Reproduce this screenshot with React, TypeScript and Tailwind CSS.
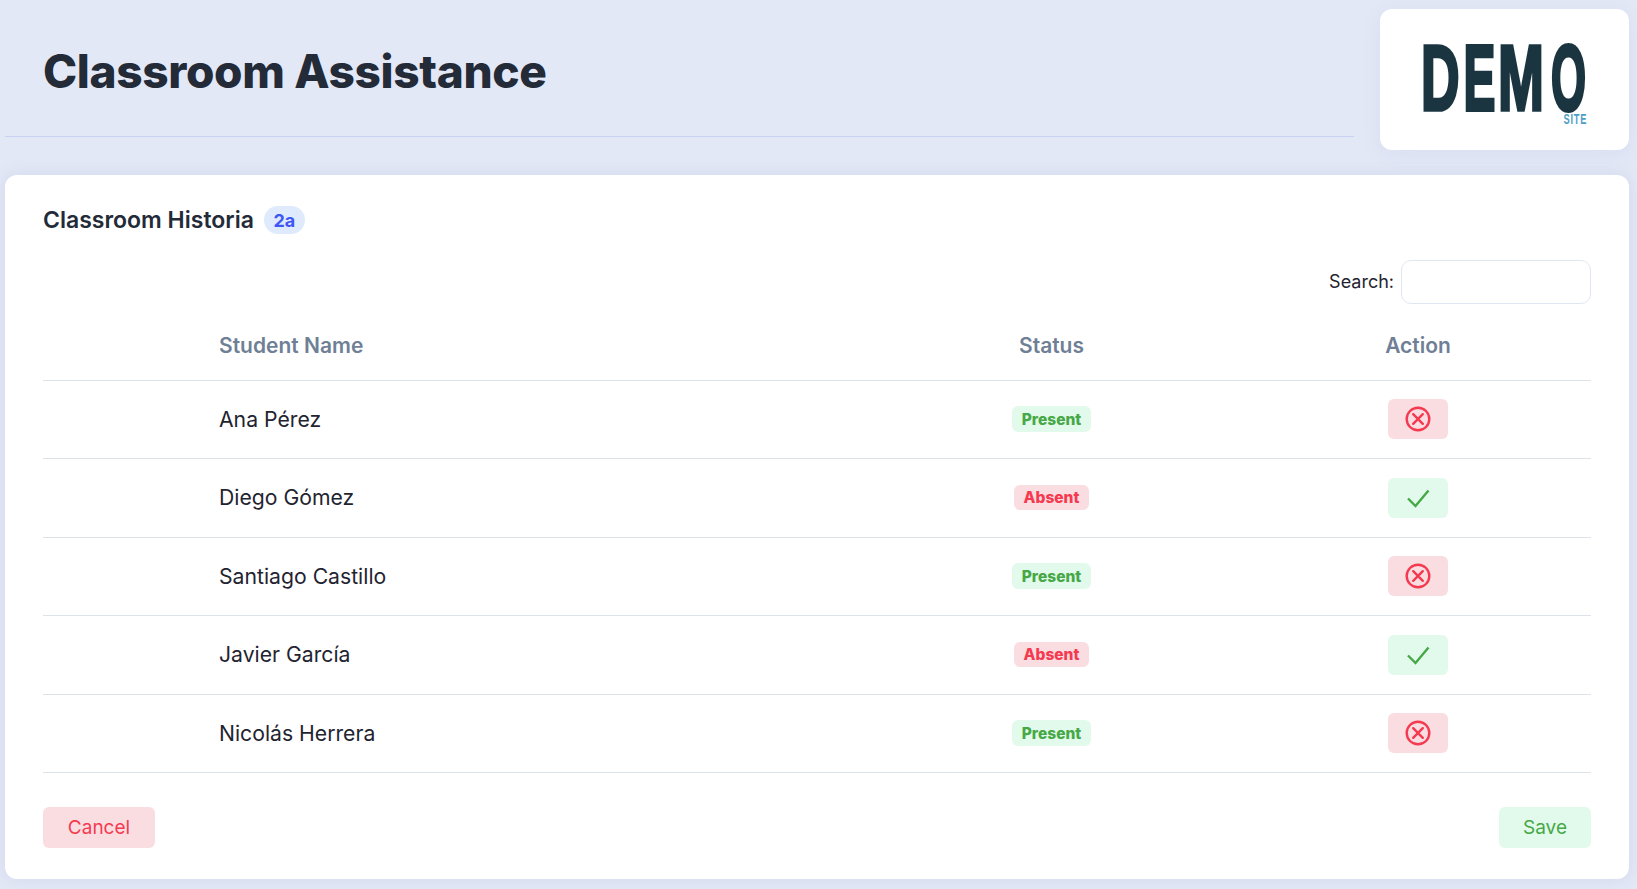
const students = [
  { name: "Ana Pérez", present: true },
  { name: "Diego Gómez", present: false },
  { name: "Santiago Castillo", present: true },
  { name: "Javier García", present: false },
  { name: "Nicolás Herrera", present: true },
];

// x and horizontal squeeze for each logo letter, the logo font is much narrower than Arial
const logoLetters = [
  { ch: "D", x: -3, sx: 0.58 },
  { ch: "E", x: 39.5, sx: 0.52 },
  { ch: "M", x: 74, sx: 0.6 },
  { ch: "O", x: 127, sx: 0.49 },
];

function Logo() {
  return (
    <svg width="180" height="106" viewBox="-5 -20 180 106">
      {logoLetters.map((l) => (
        <text
          key={l.ch}
          transform={`translate(${l.x} 64.5) scale(${l.sx} 1)`}
          fontFamily="Liberation Sans, sans-serif"
          fontWeight="700"
          fontSize="92"
          fill="#1b3540"
          stroke="#1b3540"
          strokeWidth="3"
          vectorEffect="non-scaling-stroke"
        >
          {l.ch}
        </text>
      ))}
      <text
        transform="translate(139.5 78.5) scale(0.62 1)"
        fontFamily="Liberation Sans, sans-serif"
        fontWeight="700"
        fontSize="15"
        letterSpacing="1.2"
        fill="#4d9fc4"
      >
        SITE
      </text>
    </svg>
  );
}

function StatusBadge({ present }: { present: boolean }) {
  return present ? (
    <span className="inline-flex h-[26px] w-[79px] items-center justify-center rounded-md bg-[#e2faec] text-[15.5px] font-extrabold text-[#46a846]">
      Present
    </span>
  ) : (
    <span className="inline-flex h-[25px] w-[75px] items-center justify-center rounded-md bg-[#fadde1] text-[15.5px] font-extrabold text-[#f53a50]">
      Absent
    </span>
  );
}

function ActionButton({ present }: { present: boolean }) {
  return present ? (
    <button className="inline-flex h-10 w-[60px] items-center justify-center rounded-md bg-[#fadde1] align-middle text-[#f53a50]">
      <svg width="28" height="28" viewBox="0 0 28 28" fill="none" stroke="currentColor" strokeWidth="2.4" strokeLinecap="round">
        <circle cx="14" cy="14" r="11.3" />
        <path d="M9.2 9.2 18.8 18.8M18.8 9.2 9.2 18.8" />
      </svg>
    </button>
  ) : (
    <button className="inline-flex h-10 w-[60px] items-center justify-center rounded-md bg-[#e2faec] align-middle text-[#46a846]">
      <svg width="24" height="24" viewBox="0 0 24 24" fill="none" stroke="currentColor" strokeWidth="2.4">
        <path d="M2 12.5 9.5 20 22.5 4.5" />
      </svg>
    </button>
  );
}

export default function App() {
  return (
    <div className="min-h-screen bg-[#e3e8f6] px-[5px] pt-[9px] pb-[10px] font-['Inter',sans-serif] text-[#1f2430]">
      <div className="flex items-start gap-[26px] pr-[3px]">
        <div className="flex h-[128px] flex-1 items-center border-b border-[#c9d2f3] pb-[3px] pl-[38px]">
          <h1 className="text-[46px] font-extrabold leading-none tracking-[-0.35px] text-[#232a38]">Classroom Assistance</h1>
        </div>
        <div className="flex h-[141px] w-[249px] items-center justify-center rounded-xl bg-white pb-[4px] pl-[8px] shadow-[0_4px_20px_rgba(90,110,170,0.08)]">
          <Logo />
        </div>
      </div>

      <div className="mt-[25px] mr-[3px] flex h-[704px] flex-col rounded-xl bg-white px-[38px] pt-[31px] shadow-[0_0_16px_rgba(90,110,170,0.12)]">
        <div className="flex h-[28px] items-center gap-[10px]">
          <h2 className="text-[23px] font-semibold text-[#232a38]">Classroom Historia</h2>
          <span className="flex h-[28px] w-[41px] items-center justify-center rounded-[14px] bg-[#dfebfd] text-[18px] font-bold text-[#3f57f5]">
            2a
          </span>
        </div>

        <div className="mt-[26px] flex items-center justify-end gap-[7px]">
          <label className="pb-[2px] text-[18px]">Search:</label>
          <input className="h-[44px] w-[190px] rounded-[10px] border border-[#e2e6f0] bg-white outline-none" />
        </div>

        <table className="mt-[1px] w-full table-fixed border-collapse">
          <thead>
            <tr className="h-[75px] border-b border-[#dde3ea] text-[21px] text-[#6f7f95]">
              <th className="w-[160px]"></th>
              <th className="w-[655px] px-4 pt-[6px] text-left font-semibold">Student Name</th>
              <th className="w-[387px] pt-[6px] text-center font-semibold">Status</th>
              <th className="pt-[6px] text-center font-semibold">Action</th>
            </tr>
          </thead>
          <tbody>
            {students.map((s) => (
              <tr key={s.name} className="h-[78.5px] border-b border-[#dde3ea]">
                <td></td>
                <td className="px-4 pt-[1px] text-[21.2px]">{s.name}</td>
                <td className="text-center">
                  <StatusBadge present={s.present} />
                </td>
                <td className="text-center">
                  <ActionButton present={s.present} />
                </td>
              </tr>
            ))}
          </tbody>
        </table>

        <div className="mt-[34px] flex items-center justify-between text-[19px]">
          <button className="h-[41px] w-[112px] rounded-md bg-[#fadde1] pt-[1px] text-[#f53a50]">Cancel</button>
          <button className="h-[41px] w-[92px] rounded-md bg-[#e2faec] pt-[1px] text-[#46a846]">Save</button>
        </div>
      </div>
    </div>
  );
}
